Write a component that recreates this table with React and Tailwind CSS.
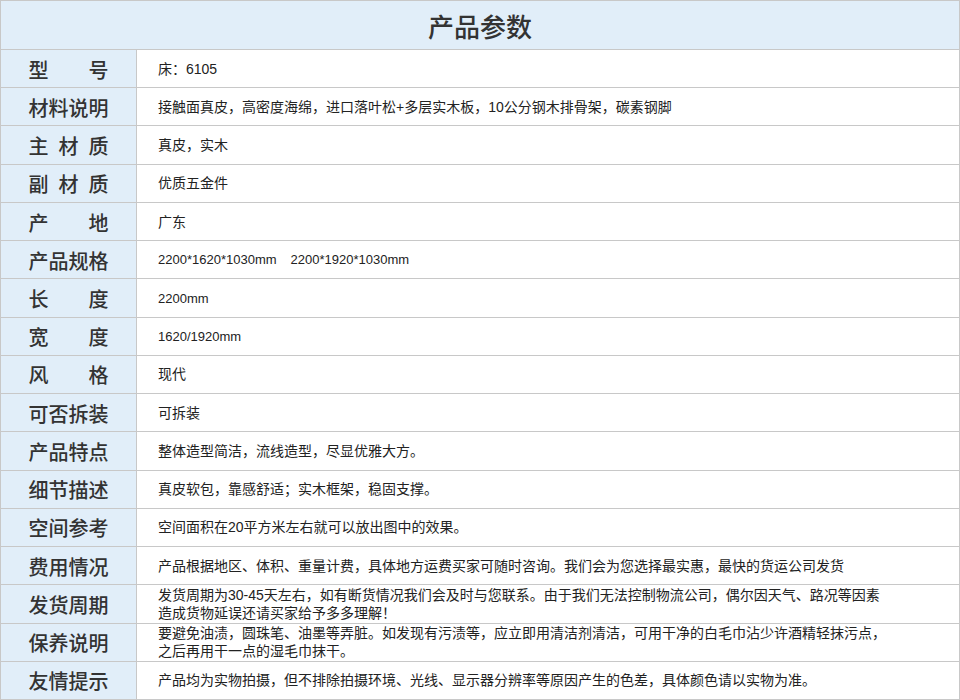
import React from "react";

const DIM = "dim";

const rows = [
  ["型号", "床：6105"],
  ["材料说明", "接触面真皮，高密度海绵，进口落叶松+多层实木板，10公分钢木排骨架，碳素钢脚"],
  ["主材质", "真皮，实木"],
  ["副材质", "优质五金件"],
  ["产地", "广东"],
  ["产品规格", { type: DIM, parts: ["2200*1620*1030mm", "2200*1920*1030mm"] }],
  ["长度", { type: DIM, parts: ["2200mm"] }],
  ["宽度", { type: DIM, parts: ["1620/1920mm"] }],
  ["风格", "现代"],
  ["可否拆装", "可拆装"],
  ["产品特点", "整体造型简洁，流线造型，尽显优雅大方。"],
  ["细节描述", "真皮软包，靠感舒适；实木框架，稳固支撑。"],
  ["空间参考", "空间面积在20平方米左右就可以放出图中的效果。"],
  ["费用情况", "产品根据地区、体积、重量计费，具体地方运费买家可随时咨询。我们会为您选择最实惠，最快的货运公司发货"],
  ["发货周期", ["发货周期为30-45天左右，如有断货情况我们会及时与您联系。由于我们无法控制物流公司，偶尔因天气、路况等因素", "造成货物延误还请买家给予多多理解！"]],
  ["保养说明", ["要避免油渍，圆珠笔、油墨等弄脏。如发现有污渍等，应立即用清洁剂清洁，可用干净的白毛巾沾少许酒精轻抹污点，", "之后再用干一点的湿毛巾抹干。"]],
  ["友情提示", "产品均为实物拍摄，但不排除拍摄环境、光线、显示器分辨率等原因产生的色差，具体颜色请以实物为准。"],
];

function Label({ text }) {
  const chars = text.split("");
  return (
    <div className="w-[80px] flex justify-between">
      {chars.map((c, i) => (
        <span key={i}>{c}</span>
      ))}
    </div>
  );
}

function Content({ content }) {
  if (Array.isArray(content)) {
    return (
      <div className="flex flex-col">
        {content.map((l, j) => (
          <div key={j} className="h-[18px] leading-[18px] whitespace-nowrap">
            {l}
          </div>
        ))}
      </div>
    );
  }
  if (content && content.type === DIM) {
    return (
      <div className="flex gap-[14px] text-[13px] leading-[18px] pt-[1px]">
        {content.parts.map((p, j) => (
          <span key={j}>{p}</span>
        ))}
      </div>
    );
  }
  return <div className="leading-[18px]">{content}</div>;
}

export default function App() {
  return (
    <div
      className="w-[960px] h-[700px] border border-[#c8c8c8] flex flex-col bg-white text-[#222]"
      style={{ fontFamily: '"Noto Sans CJK SC", "Noto Sans", sans-serif' }}
    >
      <div className="h-[49px] shrink-0 bg-[#e1eef9] border-b border-[#c8c8c8] flex items-center justify-center text-[26px] text-[#333] font-medium">
        产品参数
      </div>
      <div className="flex-1 flex flex-col">
        {rows.map(([label, content], i) => (
          <div
            key={i}
            className={
              "flex-1 flex min-h-0 " +
              (i < rows.length - 1 ? "border-b border-[#c8c8c8]" : "")
            }
          >
            <div className="w-[136px] shrink-0 bg-[#e1eef9] border-r border-[#c8c8c8] flex items-center justify-center text-[20px] text-[#333] font-medium pt-[2px]">
              <Label text={label} />
            </div>
            <div
              className="flex-1 flex items-center pl-[21px] text-[14px] text-[#222]"
              style={{ fontFamily: '"Liberation Sans", "Noto Sans CJK SC", sans-serif' }}
            >
              <Content content={content} />
            </div>
          </div>
        ))}
      </div>
    </div>
  );
}
